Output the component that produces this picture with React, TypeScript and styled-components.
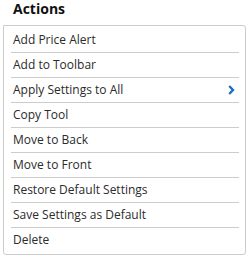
import styled, { createGlobalStyle } from "styled-components";

const GlobalStyle = createGlobalStyle`
  html, body {
    margin: 0;
    padding: 0;
    background: #ffffff;
  }
  body {
    font-family: "Open Sans", "Liberation Sans", sans-serif;
  }
`;

const actions = [
  { label: "Add Price Alert" },
  { label: "Add to Toolbar" },
  { label: "Apply Settings to All", submenu: true },
  { label: "Copy Tool" },
  { label: "Move to Back" },
  { label: "Move to Front" },
  { label: "Restore Default Settings" },
  { label: "Save Settings as Default" },
  { label: "Delete" },
];

const Chevron = () => (
  <svg width="7" height="10" viewBox="0 0 7 10">
    <path d="M0.4 1.8 L2 0.2 L6.6 5 L2 9.8 L0.4 8.2 L3.4 5 Z" fill="#1b6ec2" />
  </svg>
);

const App = () => {
  return (
    <>
      <GlobalStyle />
      <Panel>
        <Title>Actions</Title>
        <Menu>
          {actions.map((item) => (
            <Item key={item.label}>
              <Label>{item.label}</Label>
              {item.submenu && <Chevron />}
            </Item>
          ))}
        </Menu>
      </Panel>
    </>
  );
};

export default App;

const Panel = styled.div`
  width: 248px;
  height: 257px;
  display: flex;
  flex-direction: column;
`;

const Title = styled.div`
  height: 25px;
  padding-left: 13px;
  font-size: 14px;
  line-height: 18px;
  font-weight: 700;
  color: #111111;
`;

const Menu = styled.div`
  margin-left: 3px;
  width: 243px;
  box-sizing: border-box;
  border: 1px solid #cccccc;
  border-radius: 0 3px 3px 3px;
  padding: 2px 0;
  display: flex;
  flex-direction: column;
`;

const Item = styled.div`
  height: 24px;
  margin: 0 6px 0 7px;
  padding: 0 4px 0 2px;
  display: flex;
  align-items: center;
  justify-content: space-between;
  border-bottom: 1px solid #cccccc;

  &:last-child {
    border-bottom: none;
  }
`;

const Label = styled.span`
  font-size: 12px;
  line-height: 24px;
  color: #2b2b2b;
  white-space: nowrap;
`;
